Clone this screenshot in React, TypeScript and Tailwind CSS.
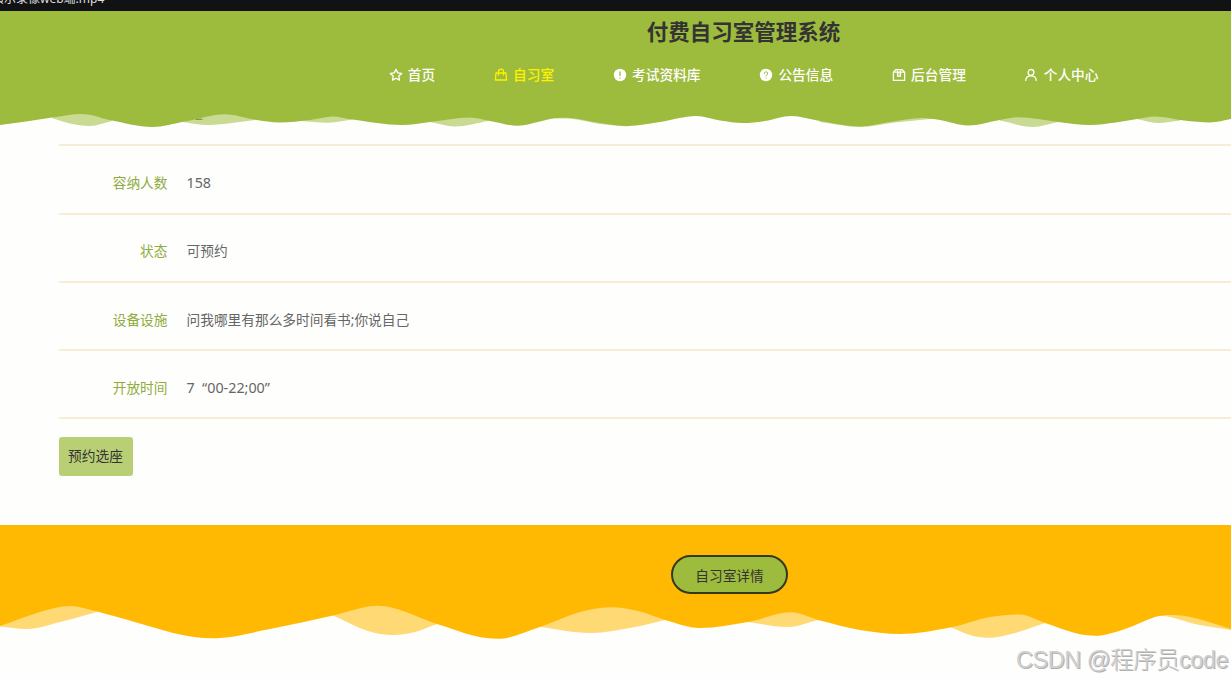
import { ReactNode } from 'react';

type Point = [number, number];

const rows = [
    { label: '编号', value: '02' },
    { label: '容纳人数', value: '158' },
    { label: '状态', value: '可预约' },
    { label: '设备设施', value: '问我哪里有那么多时间看书;你说自己' },
    { label: '开放时间', value: '7  “00-22;00”' },
];

const headerWave: Point[] = [
    [0, 125], [26, 121.5], [52, 117.5], [82, 114], [112, 120.5], [152, 127], [185, 121.5], [225, 114.3], [255, 119.8],
    [280, 122.5], [310, 120], [333, 116.5], [352, 119.5], [402, 125], [430, 122], [470, 117.5], [490, 121], [518, 125.8],
    [540, 121.5], [560, 117.8], [575, 118.5], [600, 123], [628, 126], [660, 122], [696, 116], [720, 120.5], [743, 123],
    [765, 121], [791, 116], [820, 121], [860, 126.5], [890, 122], [922, 118], [940, 120], [968, 125.5], [1000, 120],
    [1018, 117.3], [1058, 122], [1090, 125], [1116, 122.5], [1137, 119], [1155, 116.5], [1184, 120.5], [1210, 122.5], [1231, 119],
];
const headerShade: Point[][] = [
    [[52, 118], [70, 123.5], [90, 126], [112, 121]],
    [[183, 122], [208, 125], [232, 123], [255, 120]],
    [[300, 121], [328, 122.7], [352, 119.5]],
    [[430, 122], [455, 126.5], [488, 121]],
    [[556, 118.5], [566, 118.5], [600, 124], [628, 126.5]],
    [[820, 122], [860, 127], [895, 122.5], [935, 118.5]],
    [[1000, 120.5], [1033, 127], [1058, 122]],
    [[1137, 119], [1158, 123], [1180, 120.5]],
];

const bandWave: Point[] = [
    [0, 626], [40, 612], [70, 606], [97, 611.5], [145, 625], [180, 634.5], [212, 638.3], [270, 629], [333, 615.5],
    [378, 605.8], [437, 624], [475, 636], [498, 638.8], [540, 627], [580, 612], [613, 607.3], [642, 612], [665, 620],
    [700, 628], [748, 622], [791, 612.3], [820, 620.5], [860, 630], [900, 634], [950, 627.5], [990, 617], [1020, 614.5],
    [1045, 623], [1075, 633], [1095, 635.8], [1125, 629], [1155, 617], [1172, 615], [1195, 618], [1231, 629],
];
const bandShade: Point[][] = [
    [[0, 626.5], [27, 629], [60, 622], [97, 612]],
    [[333, 615.5], [368, 631], [393, 635], [415, 632], [437, 624]],
    [[540, 627], [590, 633], [635, 627], [665, 620]],
    [[748, 622], [788, 627], [818, 620]],
    [[950, 627], [970, 635], [988, 637.8], [1015, 633], [1045, 623]],
    [[1155, 616], [1162, 616], [1195, 624], [1231, 630]],
];

// slope of the edge at a point, level on crests and troughs
function slope(points: Point[], i: number) {
    const prev = points[i - 1];
    const next = points[i + 1];
    if (!prev || !next) {
        const a = prev || points[i];
        const b = next || points[i];
        return (b[1] - a[1]) / (b[0] - a[0]);
    }
    if ((points[i][1] - prev[1]) * (next[1] - points[i][1]) <= 0) return 0;
    return (next[1] - prev[1]) / (next[0] - prev[0]);
}

// smooth bottom edge, closed along the top
function wavePath(points: Point[], top: number) {
    let d = `M${points[0][0]} ${top}L${points[0][0]} ${points[0][1]}`;
    for (let i = 0; i < points.length - 1; i++) {
        const [x1, y1] = points[i];
        const [x2, y2] = points[i + 1];
        const third = (x2 - x1) / 3;
        d += `C${x1 + third} ${y1 + slope(points, i) * third} ${x2 - third} ${y2 - slope(points, i + 1) * third} ${x2} ${y2}`;
    }
    return d + `L${points[points.length - 1][0]} ${top}Z`;
}

function Wave({ line, shade, top, height, className }: { line: Point[]; shade: Point[][]; top: number; height: number; className: string }) {
    return (
        <svg className={className} width="1231" height={height} viewBox={`0 ${top} 1231 ${height}`} fill="currentColor">
            {shade.map((s, i) => <path key={i} d={wavePath(s, top)} opacity="0.55" />)}
            <path d={wavePath(line, top)} />
        </svg>
    );
}

function Icon({ children }: { children: ReactNode }) {
    return (
        <svg className="w-[14px] h-[14px] shrink-0" viewBox="0 0 14 14" fill="none" stroke="currentColor" strokeWidth="1.3" strokeLinejoin="round" strokeLinecap="round">
            {children}
        </svg>
    );
}

const nav = [
    {
        label: '首页',
        icon: <path d="M7 1.3 8.7 4.9l4 .5-2.9 2.7.7 4L7 10.2l-3.5 1.9.7-4L1.3 5.4l4-.5Z" />,
    },
    {
        label: '自习室',
        active: true,
        icon: <><path d="M2 5h10l.6 7H1.4Z" /><path d="M4.5 7V3.6a2.5 2.5 0 0 1 5 0V7" /></>,
    },
    {
        label: '考试资料库',
        icon: <><circle cx="7" cy="7" r="6.2" fill="currentColor" stroke="none" /><path className="stroke-[#9dbb3c]" d="M7 3.8v3.6M7 9.9v.1" /></>,
    },
    {
        label: '公告信息',
        icon: <><circle cx="7" cy="7" r="6.2" fill="currentColor" stroke="none" /><path className="stroke-[#9dbb3c]" strokeWidth="1" d="M5.3 5.5a1.7 1.7 0 1 1 2.5 1.5q-.8.4-.8 1.1M7 10v.1" /></>,
    },
    {
        label: '后台管理',
        icon: <><path d="M1.4 4.2h11.2v8.2H1.4ZM1.6 4 3.8 1.6h6.4L12.4 4" /><path d="M5.4 2v6.2M8.6 2v6.2M5.4 8.2h3.2M7 4.2v4" strokeWidth="1" /></>,
    },
    {
        label: '个人中心',
        icon: <><circle cx="7" cy="4.4" r="2.9" /><path d="M1.8 12.6C1.8 9.5 4 7.9 7 7.9s5.2 1.6 5.2 4.7" /></>,
    },
];

export default function App() {
    return (
        <div className="relative w-[1231px] h-[679px] overflow-hidden bg-[#fefefd] text-[13.7px] text-[#666] font-['Noto_Sans','Noto_Sans_CJK_SC',sans-serif]">
            <div className="h-[11px] overflow-hidden bg-[#111214]">
                <div className="-mt-[9px] -ml-[8px] h-4 text-[12px] leading-4 text-[#ddd] whitespace-nowrap">演示录像web端.mp4</div>
            </div>

            <header className="relative z-10 h-[102px] w-[1487px] bg-[#9dbb3c] text-center">
                <h1 className="pt-[5px] text-[21.5px] leading-8 font-bold text-[#333]">付费自习室管理系统</h1>
                <nav className="mt-[17px] flex justify-center gap-[58.6px]">
                    {nav.map((item) => (
                        <a key={item.label} className={`flex items-center gap-[5.3px] leading-5 font-medium ${item.active ? 'text-[#fff200]' : 'text-white'}`}>
                            <Icon>{item.icon}</Icon>
                            {item.label}
                        </a>
                    ))}
                </nav>
                <Wave line={headerWave} shade={headerShade} top={112} height={18} className="absolute left-0 top-[101px] text-[#9dbb3c]" />
            </header>

            <main className="-mt-[35px] h-[447px] pl-[58.5px]">
                {rows.map((row) => (
                    <div key={row.label} className="flex h-[68.3px] items-center border-b-2 border-[#f8ecd6] pt-[8px]">
                        <span className="w-[109px] text-right text-[#8fac3f]">{row.label}</span>
                        <span className={/^\d/.test(row.value) ? 'ml-[19px] text-[14.3px] leading-5 whitespace-pre' : 'ml-[19px]'}>{row.value}</span>
                    </div>
                ))}
                <button className="mt-[17.5px] h-[39px] w-[74px] rounded-[3px] bg-[#b9cf76] text-[#333]">预约选座</button>
            </main>

            <section className="flex h-[80px] w-[1459px] items-start justify-center bg-[#ffb903] pt-[30px]">
                <button className="h-[39px] w-[117px] rounded-full border-2 border-[#333a1c] bg-[#9dbb3c] pt-[3px] text-[#333]">自习室详情</button>
            </section>
            <Wave line={bandWave} shade={bandShade} top={604} height={37} className="-mt-px text-[#ffb903]" />

            <div className="absolute right-[3px] bottom-0 text-[23.5px] leading-[38px] font-light tracking-[-0.5px] text-[#cfcfcf] whitespace-nowrap font-['Liberation_Sans','Noto_Sans_CJK_SC',sans-serif] [text-shadow:1px_1px_0_#b0b0b0]">
                CSDN @程序员code
            </div>
        </div>
    );
}
